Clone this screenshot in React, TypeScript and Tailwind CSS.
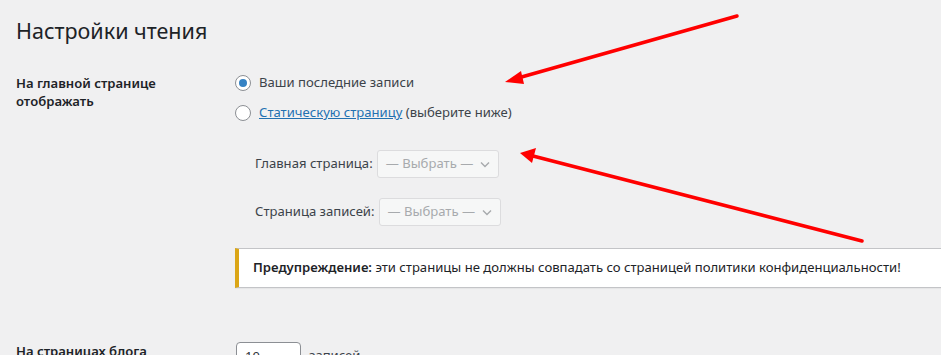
import React from 'react';

function Radio({ checked }: { checked?: boolean }) {
  return (
    <span className="relative flex h-4 w-4 shrink-0 items-center justify-center rounded-full border border-[#8c8f94] bg-white">
      {checked && <span className="h-2 w-2 rounded-full bg-[#3582c4]" />}
    </span>
  );
}

function DisabledSelect() {
  return (
    <span className="flex h-[28px] items-center gap-[6px] rounded-[3px] border border-[#dcdcde] bg-[#f6f7f7] pl-[8px] pr-[7px] text-[#a7aaad]">
      <span>— Выбрать —</span>
      <svg width="12" height="12" viewBox="0 0 12 12" fill="none" stroke="#a7aaad" strokeWidth="1.4">
        <path d="M2 4.5 6 8.5 10 4.5" />
      </svg>
    </span>
  );
}

function Arrows() {
  return (
    <svg className="pointer-events-none absolute left-0 top-0" width="941" height="355" viewBox="0 0 941 355">
      <line x1="737" y1="16" x2="518" y2="78" stroke="#ff0000" strokeWidth="3.5" strokeLinecap="round" />
      <polygon points="505,82 521,71 524,84" fill="#ff0000" />
      <line x1="862" y1="241" x2="533" y2="156" stroke="#ff0000" strokeWidth="3.5" strokeLinecap="round" />
      <polygon points="520,153 536,148 532,163" fill="#ff0000" />
    </svg>
  );
}

export default function App() {
  return (
    <div className="relative h-[355px] w-[941px] overflow-hidden bg-[#f0f0f1] font-['Noto_Sans',sans-serif] text-[13.1px] text-[#3c434a]">
      <div className="pl-4 pt-[16px]">
        <h1 className="text-[21.5px] font-normal leading-[30px] text-[#1d2327]">Настройки чтения</h1>

        <div className="mt-[22px] flex">
          <div className="w-[219px] shrink-0 pt-[6px] font-semibold leading-[18px] text-[#1d2327]">
            На главной странице
            <br />
            отображать
          </div>
          <div className="w-[720px] shrink-0">
            <label className="flex h-[30px] items-center gap-[8px]">
              <Radio checked />
              <span>Ваши последние записи</span>
            </label>
            <label className="flex h-[30px] items-center gap-[8px]">
              <Radio />
              <span>
                <a className="text-[#2271b1] underline">Статическую страницу</a> (выберите ниже)
              </span>
            </label>

            <div className="ml-[20px] mt-[22px] flex items-center gap-[4px]">
              <span>Главная страница:</span>
              <DisabledSelect />
            </div>
            <div className="ml-[20px] mt-[20px] flex items-center gap-[4px]">
              <span>Страница записей:</span>
              <DisabledSelect />
            </div>

            <div className="mt-[22px] flex h-[40px] items-center border border-l-4 border-[#c3c4c7] border-l-[#dba617] bg-white pl-[14px] text-[#1d2327] shadow-[0_1px_1px_rgba(0,0,0,0.04)]">
              <p>
                <strong className="font-semibold">Предупреждение:</strong> эти страницы не должны совпадать со страницей политики конфиденциальности!
              </p>
            </div>
          </div>
        </div>

        <div className="mt-[54px] flex">
          <div className="w-[220px] shrink-0 font-semibold leading-[18px] text-[#1d2327]">На страницах блога</div>
          <div className="flex items-start gap-[8px]">
            <span className="flex h-[30px] w-[65px] items-center rounded-[4px] border border-[#8c8f94] bg-white px-[8px] text-[#2c3338]">
              10
            </span>
            <span className="pt-[4px]">записей</span>
          </div>
        </div>
      </div>
      <Arrows />
    </div>
  );
}
